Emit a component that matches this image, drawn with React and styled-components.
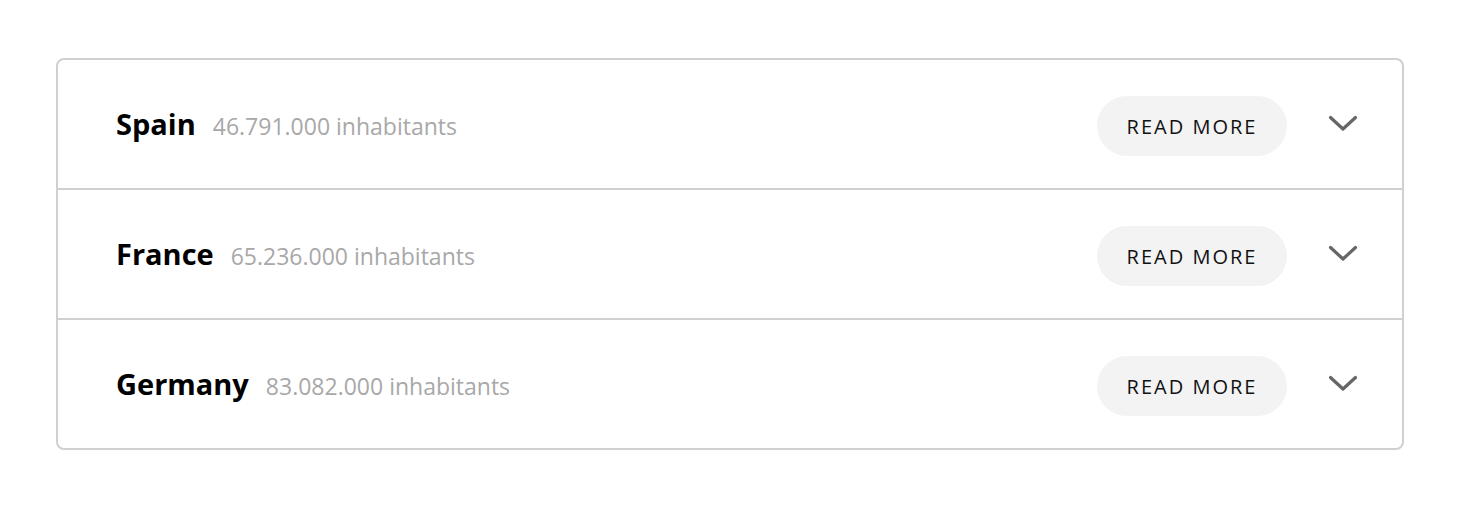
import React from "react";
import styled, { createGlobalStyle } from "styled-components";

const countries = [
  { name: "Spain", people: "46.791.000" },
  { name: "France", people: "65.236.000" },
  { name: "Germany", people: "83.082.000" },
];

const App = () => {
  return (
    <Page>
      <GlobalStyle />
      <Card>
        {countries.map((c) => (
          <Row key={c.name}>
            <Title>
              <Name>{c.name}</Name>
              <Count>{c.people} inhabitants</Count>
            </Title>
            <ReadMore>READ MORE</ReadMore>
            <Toggle aria-label="expand">
              <svg width="30" height="18" viewBox="0 0 30 18">
                <path
                  d="M2.5 2.5 L15 14 L27.5 2.5"
                  fill="none"
                  stroke="#666"
                  strokeWidth="3.2"
                  strokeLinecap="round"
                  strokeLinejoin="round"
                />
              </svg>
            </Toggle>
          </Row>
        ))}
      </Card>
    </Page>
  );
};

export default App;

const GlobalStyle = createGlobalStyle`
  body {
    margin: 0;
    background: #fff;
    font-family: "Open Sans", "Noto Sans", sans-serif;
  }
`;

const Page = styled.div`
  padding: 58px 60px 0 56px;
`;

const Card = styled.div`
  border: 2px solid #d0d0d0;
  border-radius: 8px;
`;

const Row = styled.div`
  display: flex;
  align-items: center;
  height: 128px;
  padding: 0 44px 0 58px;
  & + & {
    border-top: 2px solid #d0d0d0;
  }
`;

const Title = styled.div`
  flex: 1;
  display: flex;
  align-items: baseline;
  gap: 17px;
  margin-top: -2px;
`;

const Name = styled.span`
  font-size: 29px;
  font-weight: 700;
  color: #000;
`;

const Count = styled.span`
  font-size: 23px;
  color: #a8a8a8;
`;

const ReadMore = styled.button`
  width: 190px;
  height: 60px;
  border: none;
  border-radius: 30px;
  background: #f3f3f3;
  font-family: "Open Sans", "Noto Sans", sans-serif;
  font-size: 20px;
  letter-spacing: 2px;
  color: #111;
  cursor: pointer;
  margin-top: 4px;
  padding: 0;
`;

const Toggle = styled.button`
  display: flex;
  align-items: center;
  justify-content: center;
  width: 30px;
  margin-left: 41px;
  padding: 0;
  border: none;
  background: transparent;
  cursor: pointer;
`;
